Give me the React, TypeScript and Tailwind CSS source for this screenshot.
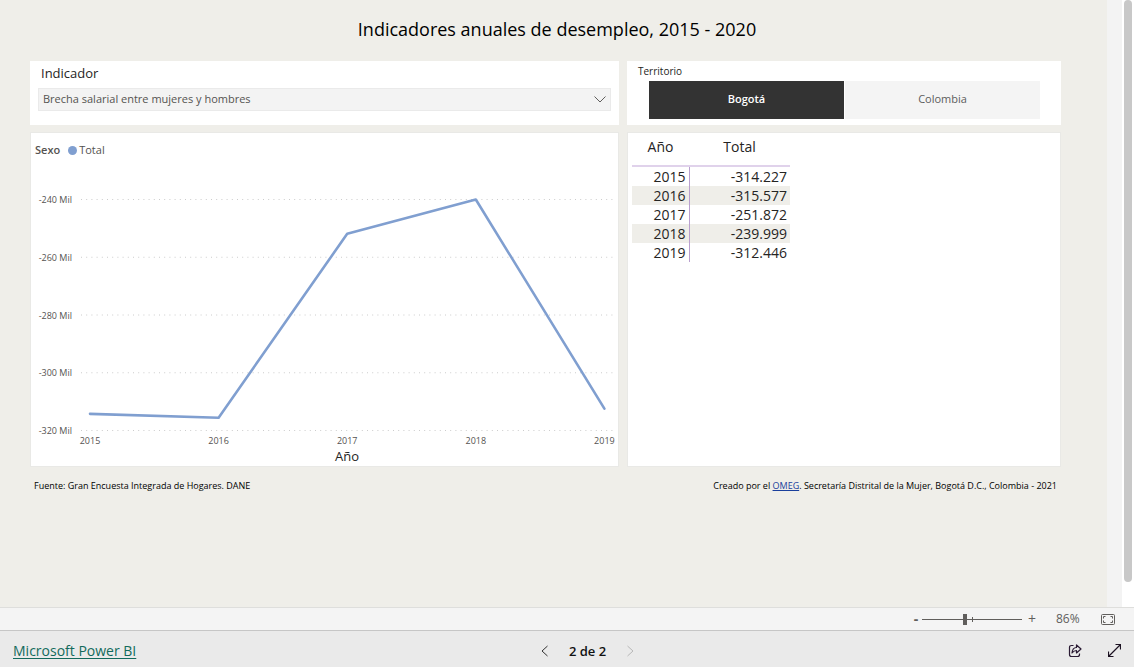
import { useState } from 'react';

const series = [
    { year: 2015, value: -314.227 },
    { year: 2016, value: -315.577 },
    { year: 2017, value: -251.872 },
    { year: 2018, value: -239.999 },
    { year: 2019, value: -312.446 },
];

const ticks = [-240, -260, -280, -300, -320];
const territories = ['Bogotá', 'Colombia'];

// Chart scales, in viewBox units
const xFor = (index: number) => 59 + index * 128.6;
const yFor = (value: number) => 39.5 + (-240 - value) * 2.8875;

function IndicatorFilter() {
    return (
        <section className="bg-white px-2 pt-1">
            <label htmlFor="indicador" className="block pl-[3px] text-[13px] leading-4 text-[#252423]">
                Indicador
            </label>
            <div className="relative mt-[7px]">
                <select
                    id="indicador"
                    className="block h-[23px] w-full appearance-none border border-[#eaeaea] bg-[#f3f3f3] px-1 text-[11px] text-[#555351]"
                >
                    <option>Brecha salarial entre mujeres y hombres</option>
                </select>
                <svg
                    viewBox="0 0 12 7"
                    className="pointer-events-none absolute top-2 right-[5px] h-[7px] w-3"
                    fill="none"
                    stroke="#605e5c"
                >
                    <path d="M0.5 0.5 6 6 11.5 0.5" />
                </svg>
            </div>
        </section>
    );
}

function TerritoryFilter() {
    const [selected, setSelected] = useState('Bogotá');

    return (
        <section className="bg-white pt-[3px]">
            <h2 id="territorio" className="pl-[11px] text-[10px] leading-[14px] text-[#252423]">
                Territorio
            </h2>
            <div role="group" aria-labelledby="territorio" className="mt-[3px] flex gap-px pr-[21px] pl-[22px]">
                {territories.map((name) => (
                    <button
                        key={name}
                        type="button"
                        aria-pressed={selected === name}
                        onClick={() => setSelected(name)}
                        className={`h-[38px] flex-1 pb-[2px] text-[11px] ${
                            selected === name ? 'bg-[#333333] font-semibold text-white' : 'bg-[#f4f4f4] text-[#5c5c5c]'
                        }`}
                    >
                        {name}
                    </button>
                ))}
            </div>
        </section>
    );
}

function LineChart() {
    const points = series.map((d, i) => `${xFor(i)},${yFor(d.value)}`).join(' ');

    return (
        <section className="border border-[#e9e9e6] bg-white">
            <div className="flex h-[27px] items-end pl-1 text-[11px] leading-5 text-[#555351]">
                <span className="font-semibold">Sexo</span>
                <span className="mb-[5px] ml-2 size-[9px] rounded-full bg-[#809fd0]" />
                <span className="ml-[2px]">Total</span>
            </div>
            <svg viewBox="0 0 587 306" className="block w-full" role="img" aria-label="Total por año">
                {ticks.map((tick) => (
                    <g key={tick}>
                        <line
                            x1="50"
                            x2="582"
                            y1={yFor(tick)}
                            y2={yFor(tick)}
                            stroke="#cccccc"
                            strokeDasharray="1 4.2"
                        />
                        <text x="41" y={yFor(tick) + 3.5} textAnchor="end" fontSize="9" fill="#555351">
                            {tick} Mil
                        </text>
                    </g>
                ))}
                {series.map((d, i) => (
                    <text key={d.year} x={xFor(i)} y="284" textAnchor="middle" fontSize="9" fill="#555351">
                        {d.year}
                    </text>
                ))}
                <polyline
                    points={points}
                    fill="none"
                    stroke="#809fd0"
                    strokeWidth="2.6"
                    strokeLinejoin="round"
                    strokeLinecap="round"
                />
                <text x="316" y="301" textAnchor="middle" fontSize="13" fill="#252423">
                    Año
                </text>
            </svg>
        </section>
    );
}

function DataTable() {
    return (
        <section className="border border-[#e9e9e6] bg-white pl-1">
            <table className="border-collapse text-[14px] text-[#252423]">
                <thead>
                    <tr className="h-[33px] border-b-2 border-[#e0d2eb]">
                        <th className="w-[57px] pb-[5px] font-normal">Año</th>
                        <th className="w-[101px] pb-[5px] font-normal">Total</th>
                    </tr>
                </thead>
                <tbody className="text-right leading-[19px]">
                    {series.map((d) => (
                        <tr key={d.year} className="even:bg-[#efeee9]">
                            <td className="border-r border-[#b9a0cf] py-0 pr-[3px]">{d.year}</td>
                            <td className="py-0 pr-[3px]">{d.value.toFixed(3)}</td>
                        </tr>
                    ))}
                </tbody>
            </table>
        </section>
    );
}

function ZoomBar() {
    const [zoom, setZoom] = useState(43);

    return (
        <div className="flex h-[23px] items-center justify-end border-t border-[#dededc] bg-[#f4f4f4] pr-[19px] text-[#605e5c]">
            <button type="button" aria-label="Alejar" className="w-3 text-[14px] leading-4 font-bold">
                -
            </button>
            <div className="relative flex h-3 w-[100px] items-center">
                <span className="absolute top-1 left-[50px] h-[5px] w-px bg-[#605e5c]" />
                <input
                    type="range"
                    aria-label="Zoom"
                    value={zoom}
                    onChange={(e) => setZoom(Number(e.target.value))}
                    className="h-3 w-full appearance-none bg-[linear-gradient(#605e5c,#605e5c)] bg-[length:100%_1px] bg-center bg-no-repeat [&::-webkit-slider-thumb]:h-[11px] [&::-webkit-slider-thumb]:w-1 [&::-webkit-slider-thumb]:appearance-none [&::-webkit-slider-thumb]:bg-[#605e5c]"
                />
            </div>
            <button type="button" aria-label="Acercar" className="w-5 text-[14px] leading-4">
                +
            </button>
            <span className="w-12 pl-[14px] text-[12px]">86%</span>
            <button type="button" aria-label="Ajustar a la página" className="ml-[11px]">
                <svg viewBox="0 0 14 11" className="h-[11px] w-[14px]" fill="none" stroke="#605e5c">
                    <rect x="0.5" y="0.5" width="13" height="10" rx="1" />
                    <path d="M4.5 2.5h-2v2M2.5 6.5v2h2M9.5 2.5h2v2M11.5 6.5v2h-2" />
                </svg>
            </button>
        </div>
    );
}

function Footer() {
    return (
        <footer className="grid h-[37px] grid-cols-3 items-center border-t border-[#c6c6c6] bg-[#eaeaea] px-[13px] pt-[3px]">
            <a
                href="#powerbi"
                className="justify-self-start text-[14px] leading-5 text-[#126a5c] underline underline-offset-2"
            >
                Microsoft Power BI
            </a>
            <nav className="flex items-center gap-[21px] justify-self-center pl-[41px]">
                <button type="button" aria-label="Página anterior">
                    <svg viewBox="0 0 7 12" className="h-3 w-[7px]" fill="none" stroke="#333333">
                        <path d="M6.5 1 1 6l5.5 5" />
                    </svg>
                </button>
                <span className="text-[13px] leading-4 font-semibold text-[#111111]">2 de 2</span>
                <button type="button" aria-label="Página siguiente" disabled>
                    <svg viewBox="0 0 7 12" className="h-3 w-[7px]" fill="none" stroke="#b8b8b8">
                        <path d="M0.5 1 6 6 0.5 11" />
                    </svg>
                </button>
            </nav>
            <div className="flex items-center gap-[26px] justify-self-end">
                <button type="button" aria-label="Compartir">
                    <svg
                        viewBox="0 0 14 14"
                        className="size-[14px]"
                        fill="none"
                        stroke="#2a1a33"
                        strokeWidth="1.2"
                        strokeLinejoin="round"
                    >
                        <path d="M5.5 1.500H3.500Q1.500 1.500 1.500 3.500v7q0 2 2 2h6q2 0 2-2v-1" />
                        <path d="M8.500 1v2.500Q4.500 3.500 4 9q2-2.500 4.500-2.500V9L13 5Z" />
                    </svg>
                </button>
                <button type="button" aria-label="Pantalla completa">
                    <svg viewBox="0 0 13 13" className="size-[13px]" fill="none" stroke="#1c1222" strokeWidth="1.2">
                        <path d="M1 12 12 1M7.500 .5h5v5M.5 7.500v5h5" />
                    </svg>
                </button>
            </div>
        </footer>
    );
}

export default function App() {
    return (
        <div className="flex min-h-screen flex-col font-['Open_Sans','Noto_Sans',sans-serif]">
            <div className="flex flex-1">
                <main className="flex-1 bg-[#efeee9] pr-[46px] pl-[30px]">
                    <h1 className="pt-[15px] pl-[23px] text-center text-[18px] leading-7 text-black">
                        Indicadores anuales de desempleo, 2015 - 2020
                    </h1>
                    <div className="mt-[18px] grid grid-cols-[589fr_434fr] grid-rows-[64px_auto] gap-x-2 gap-y-[7px]">
                        <IndicatorFilter />
                        <TerritoryFilter />
                        <LineChart />
                        <DataTable />
                    </div>
                    <div className="mt-3 flex justify-between pr-1 pl-1 text-[9px] leading-[14px] text-black">
                        <p>Fuente: Gran Encuesta Integrada de Hogares. DANE</p>
                        <p>
                            Creado por el{' '}
                            <a href="#omeg" className="text-[#1a3f9c] underline">
                                OMEG
                            </a>
                            . Secretaría Distrital de la Mujer, Bogotá D.C., Colombia - 2021
                        </p>
                    </div>
                </main>
                <div className="w-[15px] bg-[#f3f3f3]" />
                {/* Scrollbar */}
                <div className="flex w-3 flex-col bg-white px-[2px] pb-[25px]">
                    <div className="w-2 flex-1 rounded-full bg-[#c8c8c8]" />
                </div>
            </div>
            <ZoomBar />
            <Footer />
        </div>
    );
}
